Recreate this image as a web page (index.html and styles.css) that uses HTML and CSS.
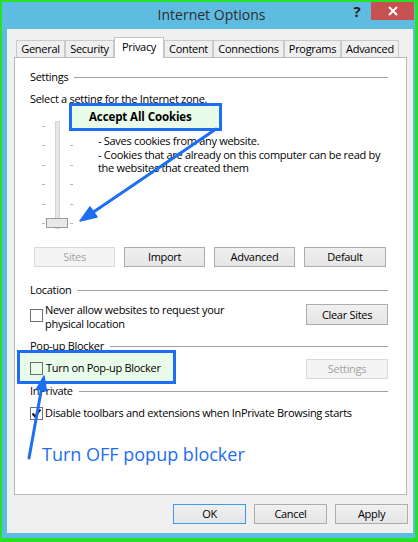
FILE: index.html
```html
<!DOCTYPE html>
<html>
<head>
<meta charset="utf-8">
<title>Internet Options</title>
<link rel="stylesheet" href="styles.css">
</head>
<body>
<div class="frame">
  <div class="titlebar">
    <div class="title">Internet Options</div>
    <div class="help">?</div>
    <div class="close">
      <svg width="10" height="10" viewBox="0 0 10 10"><path d="M1 1 L9 9 M9 1 L1 9" stroke="#fff" stroke-width="2" fill="none"/></svg>
    </div>
  </div>
  <div class="client">
    <div class="tabs">
      <div class="tab t1">General</div>
      <div class="tab t2">Security</div>
      <div class="tab t3 active">Privacy</div>
      <div class="tab t4">Content</div>
      <div class="tab t5">Connections</div>
      <div class="tab t6">Programs</div>
      <div class="tab t7">Advanced</div>
    </div>
    <div class="panel">
      <div class="group-head"><span>Settings</span><i class="rule"></i></div>
      <div class="text-line">Select a setting for the Internet zone.</div>
      <div class="zone">
        <svg class="slider" width="36" height="112" viewBox="0 0 36 112">
          <g stroke="#b4b4b4" stroke-width="1">
            <path d="M2 6.5h3M30 6.5h3M2 25.5h3M30 25.5h3M2 45.5h3M30 45.5h3M2 64.5h3M30 64.5h3M2 84.5h3M30 84.5h3M2 103.5h3M30 103.5h3"/>
          </g>
          <rect x="15.5" y="1.5" width="4" height="107" fill="#e7e7e7" stroke="#d4d4d4"/>
          <rect x="6.5" y="98.5" width="21" height="9" fill="#e8e8e8" stroke="#9c9c9c"/>
        </svg>
        <div class="desc">- Saves cookies from any website.<br>- Cookies that are already on this computer can be read by<br>the websites that created them</div>
      </div>
      <div class="btn-row">
        <div class="btn wide disabled">Sites</div>
        <div class="btn wide">Import</div>
        <div class="btn wide">Advanced</div>
        <div class="btn wide last">Default</div>
      </div>

      <div class="group-head loc-head"><span>Location</span><i class="rule"></i></div>
      <div class="opt-row loc-row">
        <div class="check two-line"><span class="box"></span><span class="label">Never allow websites to request your<br>physical location</span></div>
        <div class="btn side clear">Clear Sites</div>
      </div>

      <div class="group-head pop-head"><span>Pop-up Blocker</span><i class="rule"></i></div>
      <div class="opt-row pop-row">
        <div class="check highlight"><span class="box"></span><span class="label">Turn on Pop-up Blocker</span></div>
        <div class="btn side disabled">Settings</div>
      </div>

      <div class="group-head priv-head"><span>InPrivate</span><i class="rule"></i></div>
      <div class="opt-row priv-row">
        <div class="check"><span class="box checked"><svg width="11" height="11" viewBox="0 0 11 11"><path d="M1.5 5.5 L4 8.5 L9.5 1.5" stroke="#111" stroke-width="2" fill="none"/></svg></span><span class="label">Disable toolbars and extensions when InPrivate Browsing starts</span></div>
      </div>

      <div class="note">Turn OFF popup blocker</div>
    </div>
    <div class="footer">
      <div class="btn foot default">OK</div>
      <div class="btn foot">Cancel</div>
      <div class="btn foot">Apply</div>
    </div>
  </div>
</div>
<div class="callout">Accept All Cookies</div>
<svg class="arrows" width="418" height="542" viewBox="0 0 418 542">
  <g stroke="#1c6ef2" stroke-width="3" fill="#1c6ef2" stroke-linecap="round">
    <line x1="216" y1="129" x2="92" y2="213"/>
    <polygon points="80,221 97,217 90,207" stroke-width="1.5" stroke-linejoin="round"/>
    <line x1="29" y1="458" x2="41.5" y2="389"/>
    <polygon points="44,376 46.5,391 36.5,389" stroke-width="1.5" stroke-linejoin="round"/>
  </g>
</svg>
</body>
</html>
```
FILE: styles.css
```css
* { box-sizing: border-box; }
html, body { margin: 0; padding: 0; }
body {
  position: relative;
  width: 418px;
  height: 542px;
  overflow: hidden;
  font-family: "Open Sans", "Noto Sans", sans-serif;
  font-size: 11px;
  letter-spacing: -0.3px;
  color: #000;
  background: #5fbce1;
}
.frame {
  width: 418px;
  height: 542px;
  border-style: solid;
  border-color: #26e026;
  border-width: 2px 3px 4px 2px;
  background: #5fbce1;
  padding: 0 2px 5px 5px;
  display: flex;
  flex-direction: column;
}
.titlebar {
  height: 27px;
  margin: 0 -2px 0 -5px;
  display: flex;
  align-items: flex-start;
}
.title {
  flex: 1;
  padding-left: 78px;
  text-align: center;
  font-size: 14px;
  letter-spacing: 0;
  line-height: 26px;
  color: #2d2d2d;
}
.help {
  width: 28px;
  height: 18px;
  line-height: 18px;
  text-align: center;
  font-weight: bold;
  font-size: 15px;
  letter-spacing: 0;
  color: #222;
}
.close {
  width: 43px;
  height: 18px;
  margin-right: 1px;
  background: #c75050;
  display: flex;
  align-items: center;
  justify-content: center;
}
.close svg { display: block; }
.client {
  height: 504px;
  background: #f0f0f0;
  padding-top: 8px;
  display: flex;
  flex-direction: column;
}
.tabs {
  height: 20px;
  margin-left: 9px;
  display: flex;
  align-items: flex-end;
  position: relative;
  z-index: 1;
}
.tab {
  height: 17px;
  border: 1px solid #cacaca;
  border-bottom: none;
  background: #efefef;
  text-align: center;
  line-height: 16px;
  white-space: nowrap;
}
.tab.active {
  height: 21px;
  margin-bottom: -1px;
  background: #fff;
  border-color: #c4c4c4;
  line-height: 17px;
}
.t1 { width: 49px; }
.t2 { width: 49px; }
.t3 { width: 50px; }
.t4 { width: 49px; }
.t5 { width: 71px; }
.t6 { width: 57px; }
.t7 { width: 58px; }
.panel {
  margin-left: 7px;
  width: 393px;
  height: 438px;
  background: #fff;
  border: 1px solid #b9b9b9;
  padding: 12px 18px 0 15px;
}
.group-head {
  display: flex;
  align-items: center;
  gap: 6px;
  height: 14px;
  line-height: 14px;
  white-space: nowrap;
}
.rule {
  flex: 1;
  height: 1px;
  background: #a0a0a0;
}
.text-line {
  margin-top: 8px;
  line-height: 14px;
  white-space: nowrap;
}
.zone {
  height: 141px;
  display: flex;
  align-items: flex-start;
}
.slider {
  display: block;
  margin-left: 10px;
  margin-top: 14px;
  flex: none;
}
.desc {
  margin-left: 22px;
  padding-top: 28px;
  line-height: 13.5px;
  white-space: nowrap;
}
.btn {
  height: 20px;
  border: 1px solid #acacac;
  background: linear-gradient(#f0f0f0, #e5e5e5);
  text-align: center;
  line-height: 18px;
  white-space: nowrap;
}
.btn.disabled {
  background: #f4f4f4;
  border-color: #d9d9d9;
  color: #a3a3a3;
}
.btn-row {
  display: flex;
  gap: 9px;
  padding-left: 4px;
}
.btn.wide { width: 81px; }
.btn.wide.last { width: 82px; }
.btn.side { width: 82px; }
.btn.clear { height: 21px; margin-top: 1px; line-height: 19px; }
.loc-head { margin-top: 16px; }
.opt-row {
  display: flex;
  justify-content: space-between;
  align-items: flex-start;
  margin-top: 6px;
}
.check {
  display: flex;
  align-items: flex-start;
  line-height: 13.5px;
  white-space: nowrap;
}
.box {
  width: 13px;
  height: 13px;
  border: 1px solid #707070;
  background: #fff;
  margin-right: 2px;
  flex: none;
  display: flex;
  align-items: center;
  justify-content: center;
}
.box svg { display: block; }
.two-line .box { margin-top: 6px; }
.pop-head { margin-top: 9px; }
.highlight {
  width: 159px;
  height: 34px;
  margin: -9px 0 -5px -13px;
  padding: 2px 0 0 10px;
  border: 3px solid #1c6ef2;
  background: #e9fbe9;
  align-items: center;
}
.highlight .box {
  background: transparent;
  border-color: #6d6d6d;
}
.highlight .label { margin-left: 1px; }
.priv-head { margin-top: 5px; }
.priv-row { margin-top: 8px; }
.priv-row .box { margin-top: 1px; }
.note {
  margin-top: 22px;
  margin-left: 12px;
  font-size: 18px;
  letter-spacing: 0;
  line-height: 24px;
  color: #1c6ef2;
  white-space: nowrap;
}
.footer {
  display: flex;
  justify-content: flex-end;
  gap: 8px;
  margin-top: 9px;
  padding-right: 5px;
}
.btn.foot { width: 73px; }
.btn.default { border-color: #3c99f0; }
.callout {
  position: absolute;
  left: 69px;
  top: 103px;
  width: 153px;
  height: 28px;
  border: 3px solid #1c6ef2;
  background: #e9fbe9;
  padding-left: 17px;
  font-weight: bold;
  font-size: 11.5px;
  letter-spacing: -0.1px;
  line-height: 22px;
  white-space: nowrap;
}
.arrows {
  position: absolute;
  left: 0;
  top: 0;
  pointer-events: none;
}
```
